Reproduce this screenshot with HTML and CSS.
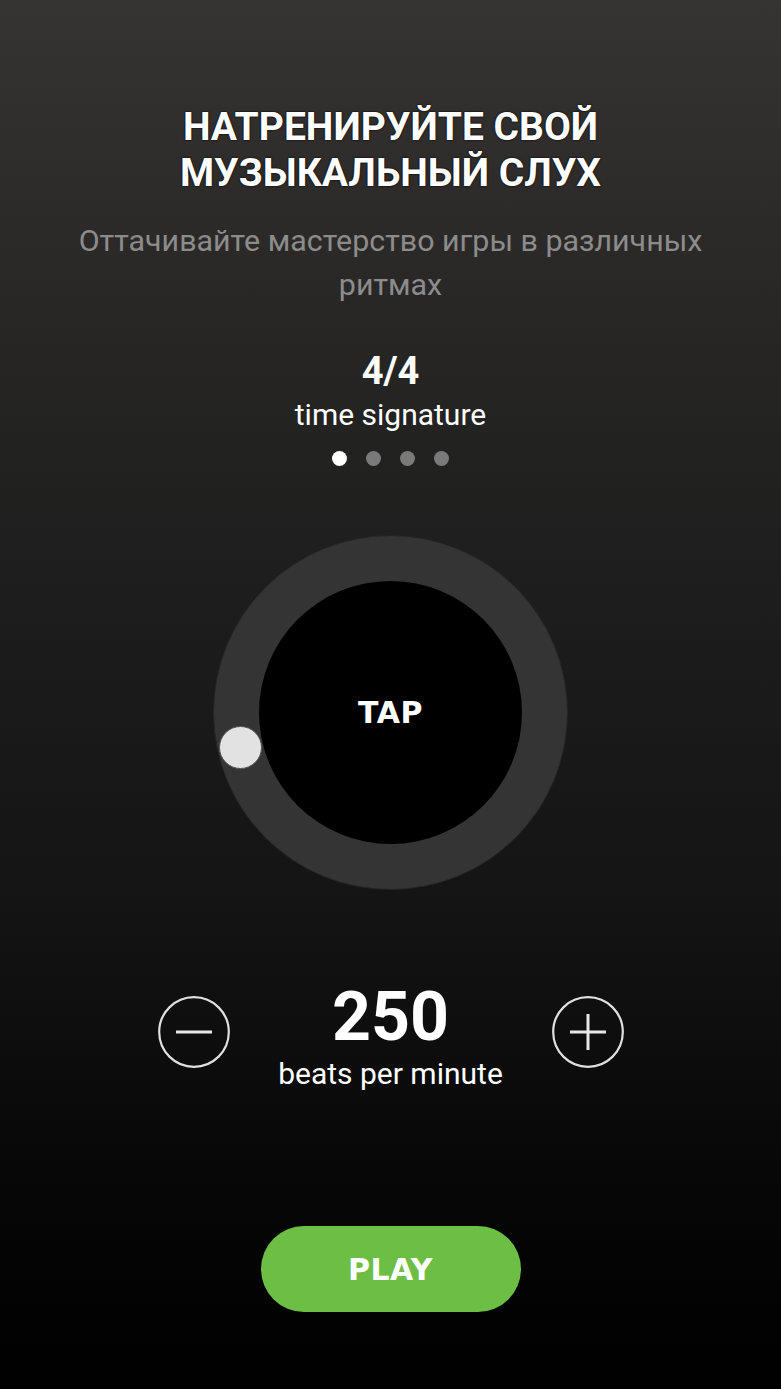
FILE: index.html
```html
<!DOCTYPE html>
<html lang="ru">
<head>
<meta charset="utf-8">
<title>Metronome</title>
<link rel="stylesheet" href="styles.css">
</head>
<body>
<main class="screen">
  <h1 class="title">НАТРЕНИРУЙТЕ СВОЙ<br>МУЗЫКАЛЬНЫЙ СЛУХ</h1>
  <p class="subtitle">Оттачивайте мастерство игры в различных ритмах</p>

  <div class="sig-value">4/4</div>
  <div class="sig-label">time signature</div>
  <div class="dots">
    <span class="dot active"></span>
    <span class="dot"></span>
    <span class="dot"></span>
    <span class="dot"></span>
  </div>

  <div class="dial">
    <div class="tap">TAP</div>
    <span class="knob"></span>
  </div>

  <div class="bpm-row">
    <button class="round-btn" aria-label="decrease">
      <svg viewBox="0 0 72 72" width="72" height="72"><circle cx="36" cy="36" r="34.8" fill="none" stroke="#e0e0e0" stroke-width="2.2"/><line x1="18" y1="36" x2="54" y2="36" stroke="#e8e8e8" stroke-width="3"/></svg>
    </button>
    <div class="bpm">
      <div class="bpm-value">250</div>
      <div class="bpm-label">beats per minute</div>
    </div>
    <button class="round-btn" aria-label="increase">
      <svg viewBox="0 0 72 72" width="72" height="72"><circle cx="36" cy="36" r="34.8" fill="none" stroke="#e0e0e0" stroke-width="2.2"/><line x1="18" y1="36" x2="54" y2="36" stroke="#e8e8e8" stroke-width="3"/><line x1="36" y1="18" x2="36" y2="54" stroke="#e8e8e8" stroke-width="3"/></svg>
    </button>
  </div>

  <button class="play">PLAY</button>
</main>
</body>
</html>
```
FILE: styles.css
```css
html, body {
  margin: 0;
  padding: 0;
}
body {
  width: 781px;
  height: 1389px;
  overflow: hidden;
  background: linear-gradient(180deg, #363432 0%, #282726 22%, #1d1d1d 43%, #141414 65%, #060606 86%, #000 100%);
  font-family: Roboto, "Noto Sans", "Liberation Sans", sans-serif;
  color: #fff;
}
.screen {
  display: flex;
  flex-direction: column;
  align-items: center;
  height: 1389px;
}
.title {
  margin: 104px 0 0;
  font-size: 39px;
  line-height: 46px;
  font-weight: 700;
  text-align: center;
  color: #fff;
  text-shadow: 0 0 2px #000, 0 0 1px #000;
}
.subtitle {
  margin: 23px 0 0;
  width: 660px;
  font-size: 30.4px;
  line-height: 44px;
  text-align: center;
  color: #8c8c8c;
}
.sig-value {
  margin-top: 44px;
  font-size: 38px;
  line-height: 40px;
  font-weight: 700;
}
.sig-label {
  margin-top: 6px;
  font-size: 30px;
  line-height: 36px;
}
.dots {
  margin-top: 18px;
  display: flex;
  gap: 19px;
}
.dot {
  width: 15px;
  height: 15px;
  border-radius: 50%;
  background: #7a7a7a;
}
.dot.active {
  background: #fff;
}
.dial {
  margin-top: 69px;
  position: relative;
  width: 355px;
  height: 355px;
  box-sizing: border-box;
  border-radius: 50%;
  background: #343434;
  border: 1px solid #242424;
  display: flex;
  align-items: center;
  justify-content: center;
}
.tap {
  width: 263px;
  height: 263px;
  border-radius: 50%;
  background: #000;
  display: flex;
  align-items: center;
  justify-content: center;
  font-family: "DejaVu Sans", "Open Sans", sans-serif;
  font-weight: 700;
  font-size: 30px;
  letter-spacing: 0.5px;
  color: #fff;
}
.knob {
  position: absolute;
  left: 5px;
  top: 190px;
  width: 43px;
  height: 43px;
  box-sizing: border-box;
  border-radius: 50%;
  background: #e2e2e2;
  border: 1px solid #555;
}
.bpm-row {
  margin-top: 89px;
  display: flex;
  align-items: center;
  gap: 46px;
}
.round-btn {
  width: 72px;
  height: 72px;
  padding: 0;
  border: 0;
  background: none;
  margin-top: -6px;
}
.round-btn svg {
  display: block;
}
.bpm {
  width: 230px;
  display: flex;
  flex-direction: column;
  align-items: center;
}
.bpm-value {
  font-size: 68px;
  line-height: 76px;
  font-weight: 700;
}
.bpm-label {
  margin-top: 2px;
  font-size: 30px;
  line-height: 34px;
}
.play {
  margin-top: 135px;
  width: 260px;
  height: 86px;
  border: 0;
  border-radius: 43px;
  background: #6cbf44;
  color: #fff;
  font-family: "DejaVu Sans", "Open Sans", sans-serif;
  font-weight: 700;
  font-size: 30px;
  letter-spacing: 0.5px;
}
```
